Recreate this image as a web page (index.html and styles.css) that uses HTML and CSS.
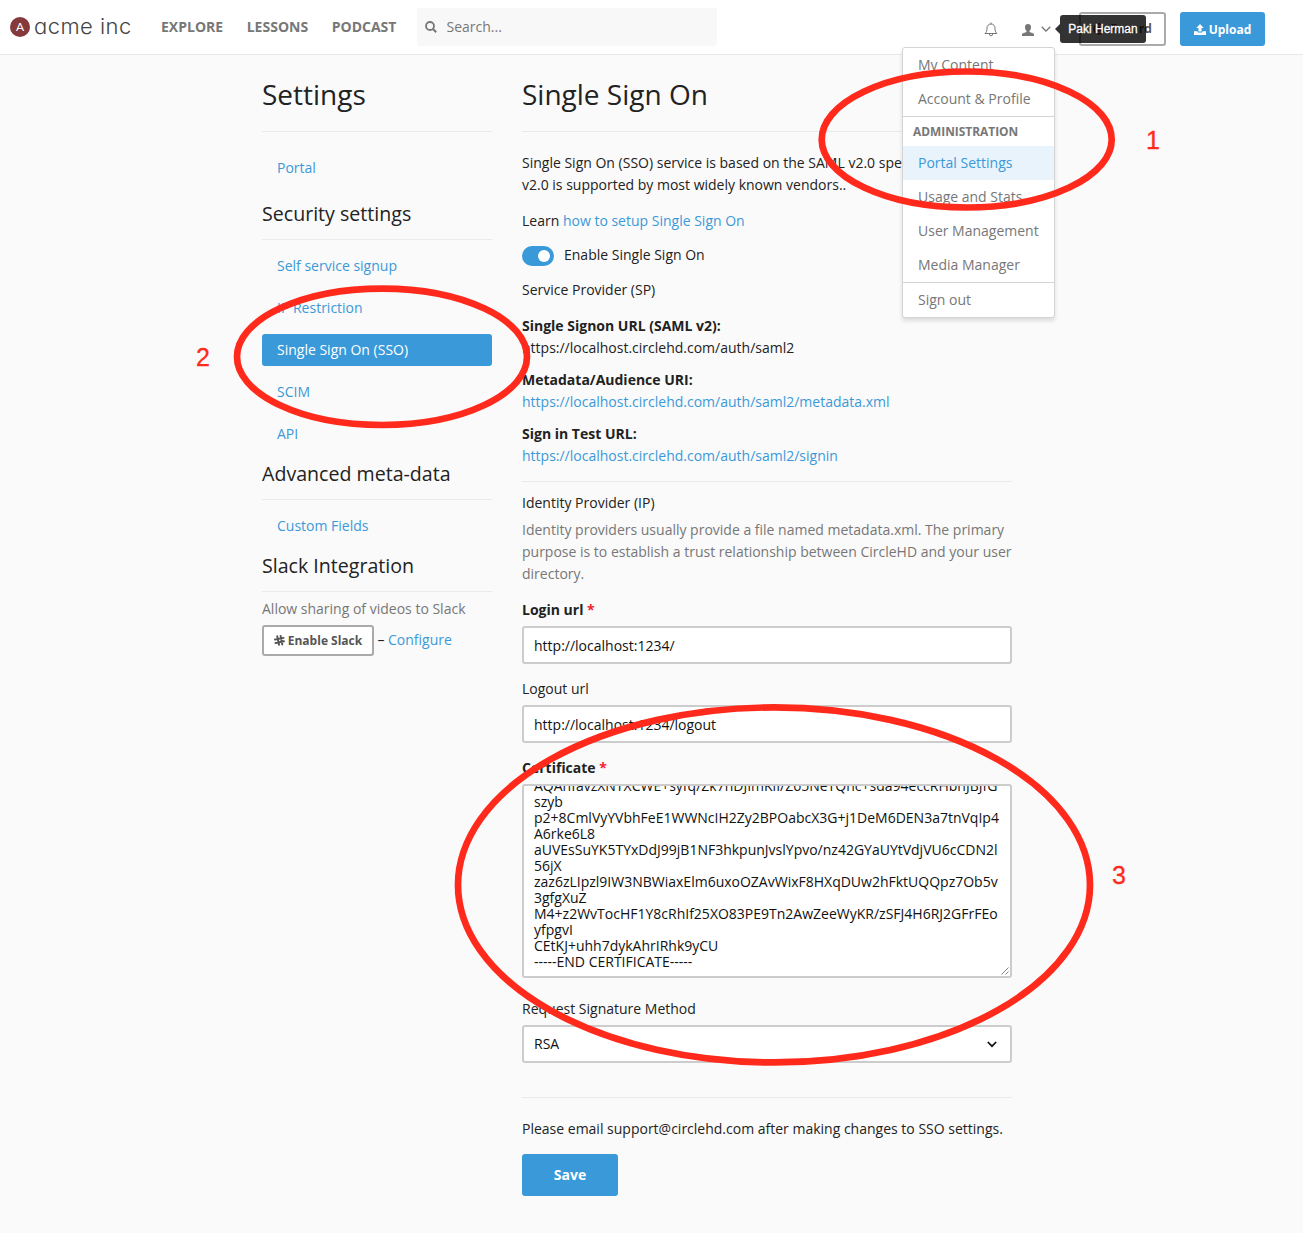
FILE: index.html
```html
<!DOCTYPE html>
<html lang="en">
<head>
<meta charset="utf-8">
<title>Single Sign On – acme inc</title>
<link rel="stylesheet" href="styles.css">
</head>
<body>
<header class="topbar">
  <a class="brand"><span class="brand-mark"><span class="brand-letter">A</span></span><span class="brand-name">acme inc</span></a>
  <nav class="topnav"><a>EXPLORE</a><a>LESSONS</a><a>PODCAST</a></nav>
  <div class="search">
    <svg width="12" height="12" viewBox="0 0 12 12"><circle cx="5" cy="5" r="4" fill="none" stroke="#777" stroke-width="1.8"/><path d="M8 8l3.2 3.2" stroke="#777" stroke-width="2"/></svg>
    <span>Search...</span>
  </div>
  <div class="actions">
    <svg class="bell" width="14" height="15" viewBox="0 0 14 15" fill="none" stroke="#777" stroke-width="1"><path d="M1 11.5C2.6 10.3 3 8.500 3 6.200C3 3.700 4.500 2 7 2S11 3.700 11 6.200C11 8.500 11.400 10.300 13 11.500ZM5.300 12Q5.500 13.800 7 13.800T8.700 12M7 .5V2"/></svg>
    <div class="user">
      <svg width="12" height="12" viewBox="0 0 12 12" fill="#777"><path d="M6 0C7.900 0 9 1.200 9 3.200C9 4.900 8.300 6.200 7.500 6.900V8L10.900 9.200C11.700 9.500 12 10 12 10.700V12H0V10.700C0 10 .3 9.500 1.100 9.200L4.500 8V6.900C3.700 6.200 3 4.900 3 3.200C3 1.200 4.100 0 6 0Z"/></svg>
      <svg class="caret" width="10" height="6" viewBox="0 0 10 6" fill="none" stroke="#777" stroke-width="1.3"><path d="M.7 .7L5 5L9.300 .7"/></svg>
      <span class="tooltip">Paki Herman</span>
      <ul class="menu">
        <li>My Content</li>
        <li>Account &amp; Profile</li>
        <li class="menu-title">ADMINISTRATION</li>
        <li class="current">Portal Settings</li>
        <li>Usage and Stats</li>
        <li>User Management</li>
        <li>Media Manager</li>
        <li class="divided">Sign out</li>
      </ul>
    </div>
    <a class="record"><svg width="12" height="12" viewBox="0 0 12 12"><circle cx="6" cy="6" r="5" fill="none" stroke="#d01919" stroke-width="1.500"/><circle cx="6" cy="6" r="2.500" fill="#d01919"/></svg>Record</a>
    <a class="upload"><svg width="12" height="11" viewBox="0 0 12 11" fill="#fff"><path d="M6 0L9.700 3.900H7.500V7.500H4.500V3.900H2.300ZM0 7.300H3.500V8.600H8.500V7.300H12V11H0Z"/></svg>Upload</a>
  </div>
</header>

<div class="page">
  <aside class="side">
    <h1>Settings</h1>
    <ul class="links first"><li>Portal</li></ul>
    <h2>Security settings</h2>
    <ul class="links"><li>Self service signup</li><li>IP Restriction</li><li class="active">Single Sign On (SSO)</li><li>SCIM</li><li>API</li></ul>
    <h2>Advanced meta-data</h2>
    <ul class="links"><li>Custom Fields</li></ul>
    <h2>Slack Integration</h2>
    <p class="note">Allow sharing of videos to Slack</p>
    <div class="slack">
      <a class="slack-btn"><svg width="11" height="11" viewBox="0 0 11 11" fill="none" stroke="#555" stroke-width="1.900" stroke-linecap="round"><path d="M3.200 1.200L5 9.800M6.600 .9L8.300 9.500M1 4.500L9.600 2.900M1.500 8L10 6.300"/></svg>Enable Slack</a>
      <span class="dash">–</span><a class="link">Configure</a>
    </div>
  </aside>

  <main class="main">
    <h1>Single Sign On</h1>
    <p class="intro">Single Sign On (SSO) service is based on the SAML v2.0 specs. SAML<br>v2.0 is supported by most widely known vendors..</p>
    <p class="learn">Learn <a class="link">how to setup Single Sign On</a></p>
    <div class="toggle-row"><span class="toggle"></span><span>Enable Single Sign On</span></div>
    <p class="sp">Service Provider (SP)</p>
    <dl class="urls">
      <div><dt>Single Signon URL (SAML v2):</dt><dd>https://localhost.circlehd.com/auth/saml2</dd></div>
      <div><dt>Metadata/Audience URI:</dt><dd class="link">https://localhost.circlehd.com/auth/saml2/metadata.xml</dd></div>
      <div><dt>Sign in Test URL:</dt><dd class="link">https://localhost.circlehd.com/auth/saml2/signin</dd></div>
    </dl>
    <section class="idp">
      <p>Identity Provider (IP)</p>
      <p class="note">Identity providers usually provide a file named metadata.xml. The primary<br>purpose is to establish a trust relationship between CircleHD and your user<br>directory.</p>
    </section>
    <div class="field"><label class="required">Login url <i>*</i></label><div class="control text">http://localhost:1234/</div></div>
    <div class="field"><label>Logout url</label><div class="control text">http://localhost:1234/logout</div></div>
    <div class="field cert"><label class="required">Certificate <i>*</i></label>
      <div class="area"><pre>AQAhfavzXNTXCWE+syfq/Zk7nDJImKiI/Z65NeTQhc+sda94eccRHbhJBJfG
szyb
p2+8CmlVyYVbhFeE1WWNcIH2Zy2BPOabcX3G+j1DeM6DEN3a7tnVqIp4
A6rke6L8
aUVEsSuYK5TYxDdJ99jB1NF3hkpunJvslYpvo/nz42GYaUYtVdjVU6cCDN2l
56jX
zaz6zLIpzl9IW3NBWiaxElm6uxoOZAvWixF8HXqDUw2hFktUQQpz7Ob5v
3gfgXuZ
M4+z2WvTocHF1Y8cRhIf25XO83PE9Tn2AwZeeWyKR/zSFJ4H6RJ2GFrFEo
yfpgvI
CEtKJ+uhh7dykAhrIRhk9yCU
-----END CERTIFICATE-----</pre><svg class="grip" width="8" height="8" viewBox="0 0 8 8" stroke="#666" stroke-width=".8"><path d="M.5 7.500L7.500 .5M4.500 7.500L7.500 4.500"/></svg></div></div>
    <div class="field"><label>Request Signature Method</label><div class="control select">RSA<svg width="10" height="7" viewBox="0 0 10 7" fill="none" stroke="#111" stroke-width="1.700"><path d="M.8 1L5 5.200L9.200 1"/></svg></div></div>
    <footer class="foot">
      <p>Please email support@circlehd.com after making changes to SSO settings.</p>
      <a class="save">Save</a>
    </footer>
  </main>
</div>

<svg class="marks" width="1303" height="1233" viewBox="0 0 1303 1233">
  <g fill="none" stroke="#ff2a1c" stroke-width="6.700">
    <ellipse cx="966.700" cy="139.500" rx="145" ry="68"/>
    <ellipse cx="382" cy="356.800" rx="145" ry="68.200"/>
    <ellipse cx="774" cy="884.900" rx="316" ry="177.500"/>
  </g>
  <g class="mark-num"><text x="1146" y="149">1</text><text x="196" y="366">2</text><text x="1112" y="883.500">3</text></g>
</svg>
</body>
</html>
```
FILE: styles.css
```css
* { box-sizing: border-box; }
body { margin: 0; height: 1233px; position: relative; overflow: hidden; background: #fafafa; color: #222; font: 14px/22px "Open Sans", sans-serif; }
h1, h2, p, ul, dl, dd, pre { margin: 0; padding: 0; font-weight: 400; }
ul { list-style: none; }
.link { color: #3a99d9; }
.note { color: #777; }

.topbar { display: flex; align-items: center; height: 55px; background: #fff; border-bottom: 1px solid #e8e8e8; padding: 0 38px 0 10px; }
.brand { display: flex; align-items: center; gap: 4px; width: 151px; }
.brand-mark { display: flex; align-items: center; justify-content: center; width: 20px; height: 20px; border-radius: 50%; background: #85393b; color: #fff; }
.brand-letter { font: 12px/20px Lato, sans-serif; }
.brand-name { padding-bottom: 2px; font: 300 22px/26px Inter, sans-serif; letter-spacing: .45px; font-feature-settings: "cv11"; color: #444; white-space: nowrap; }
.topnav { display: flex; gap: 23.600px; width: 256px; color: #777; font-weight: 700; white-space: nowrap; }
.search { display: flex; align-items: center; gap: 9.500px; width: 300px; height: 38px; padding-left: 8px; background: #f8f8f8; border-radius: 3px; color: #777; }
.actions { display: flex; align-items: center; margin: 4px 0 0 auto; height: 34px; }
.bell { margin: 1px 24px 0 0; }
.user { position: relative; display: flex; align-items: center; gap: 7px; margin: 2px 28px 0 0; }
.caret { margin-bottom: 2px; }
.tooltip { position: absolute; z-index: 3; left: 38px; top: -9px; width: 86px; height: 28px; border-radius: 3px; background: rgba(0,0,0,.8); color: #fff; font: 12px/28px "Liberation Sans", sans-serif; text-align: center; -webkit-text-stroke: .3px #fff; white-space: nowrap; }
.tooltip::before { content: ""; position: absolute; left: -5px; top: 9px; border: 5px solid transparent; border-left: 0; border-right-color: rgba(0,0,0,.8); }
.menu { position: absolute; z-index: 2; left: -120px; top: 23px; width: 153px; background: #fff; border: 1px solid #d4d4d5; border-radius: 3px; box-shadow: 0 3px 4px rgba(0,0,0,.12); color: #777; }
.menu li { height: 34px; line-height: 34px; padding-left: 15px; white-space: nowrap; }
.menu .menu-title { height: 30px; line-height: 29px; padding-left: 10px; font-size: 11.900px; font-weight: 700; border-top: 1px solid #d4d4d5; }
.menu .current { background: #e8f3fb; color: #3a99d9; }
.menu .divided { height: 35px; border-top: 1px solid #d4d4d5; }
.record, .upload { display: flex; align-items: center; justify-content: center; height: 34px; border-radius: 3px; font-size: 12px; font-weight: 700; }
.record { gap: 5px; width: 87px; border: 2px solid #aaa; color: #555; margin-right: 14px; background: #fff; }
.upload { gap: 3px; width: 85px; padding-top: 1px; background: #3a99d9; color: #fff; }

.page { display: grid; grid-template-columns: 230px 490px; column-gap: 30px; margin-left: 262px; }
h1 { height: 77px; padding-top: 19px; font-size: 28px; line-height: 40px; border-bottom: 1px solid #eaeaea; }
h2 { height: 50px; padding-top: 10px; font-size: 19.600px; line-height: 28px; border-bottom: 1px solid #eaeaea; }
.links { display: flex; flex-direction: column; gap: 10px; padding-top: 10px; color: #3a99d9; }
.links.first { padding: 20px 0 6px; }
.links li { height: 32px; line-height: 32px; padding-left: 15px; border-radius: 3px; }
.links .active { background: #3a99d9; color: #fff; }
.side .note { padding-top: 6px; }
.slack { display: flex; align-items: center; gap: 3.500px; margin-top: 5px; }
.slack-btn { display: flex; align-items: center; justify-content: center; gap: 3px; width: 112px; height: 31px; border: 2px solid #aaa; border-radius: 3px; background: #fff; color: #555; font-size: 12px; font-weight: 700; white-space: nowrap; }
.dash { color: #222; }
.dash, .slack .link { padding-bottom: 2px; }

.main { white-space: nowrap; }
.intro { padding-top: 20px; }
.learn { margin-top: 14px; }
.toggle-row { display: flex; align-items: center; gap: 10px; margin-top: 12px; height: 22px; }
.toggle { width: 32px; height: 20px; margin-top: 2px; padding: 4px; border-radius: 10px; background: #3a99d9; }
.toggle::after { content: ""; display: block; width: 12px; height: 12px; margin-left: 12px; border-radius: 50%; background: #fff; }
.sp { margin-top: 13px; }
.urls { display: flex; flex-direction: column; gap: 10px; padding: 14px 0; border-bottom: 1px solid #eaeaea; }
dt { font-weight: 700; }
.idp { display: flex; flex-direction: column; gap: 5px; padding: 10px 0 14px; }
.field { margin-bottom: 14px; }
.field label { display: block; height: 27px; }
.required { font-weight: 700; }
.required i { color: #f5222d; font-style: normal; }
.control { display: flex; align-items: center; height: 38px; padding: 0 10px; border: 2px solid #ccc; border-radius: 3px; background: #fff; color: #111; }
.control.text { padding-top: 2px; }
.select { justify-content: space-between; padding-right: 13px; }
.cert { margin-bottom: 20px; }
.area { position: relative; display: flex; flex-direction: column; justify-content: flex-end; height: 194px; overflow: hidden; padding: 0 10px 6px; border: 2px solid #ccc; border-radius: 3px; background: #fff; color: #111; }
.area pre { font: 14px/16px "Open Sans", sans-serif; }
.grip { position: absolute; right: 1px; bottom: 1px; }
.foot { margin-top: 34px; padding-top: 20px; border-top: 1px solid #eaeaea; }
.save { display: flex; align-items: center; justify-content: center; width: 96px; height: 42px; margin-top: 14px; border-radius: 3px; background: #3a99d9; color: #fff; font-weight: 700; }

.marks { position: absolute; z-index: 5; left: 0; top: 0; pointer-events: none; }
.mark-num { font: 25px "Liberation Sans", sans-serif; fill: #ff2a1c; stroke: #ff2a1c; stroke-width: .3px; }
```
